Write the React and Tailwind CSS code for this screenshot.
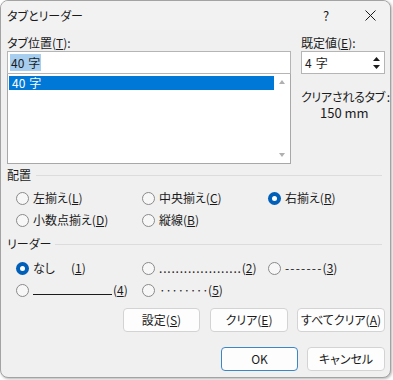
import React from "react";

const Radio = ({ checked }) =>
	checked ? (
		<span className="w-[13px] h-[13px] rounded-full bg-[#005fb8] flex items-center justify-center shrink-0">
			<span className="w-[5px] h-[5px] rounded-full bg-white" />
		</span>
	) : (
		<span className="w-[13px] h-[13px] rounded-full border border-[#8a8a8a] bg-[#f7f7f7] shrink-0" />
	);

const Option = ({ checked, children, className = "" }) => (
	<div className={"flex items-center w-[126px] h-[20px] shrink-0 " + className}>
		<Radio checked={checked} />
		<span className="ml-[4px] whitespace-nowrap">{children}</span>
	</div>
);

const Button = ({ children, w, primary }) => (
	<div
		className={
			"h-[24px] flex items-center justify-center rounded-[4px] bg-[#fdfdfd] whitespace-nowrap shrink-0 " +
			(primary ? "border border-[#3d86c6] " : "border border-[#d3d3d3] ") +
			w
		}
	>
		{children}
	</div>
);

const Section = ({ title, lineGap }) => (
	<div className="flex items-center h-[16px] leading-[16px]">
		<span>{title}</span>
		<span className={"flex-1 h-px bg-[#dcdcdc] mr-[3px] " + lineGap} />
	</div>
);

export default function App() {
	return (
		<div className="w-[393px] h-[380px] bg-white text-[12px] text-[#1b1b1b] font-['Noto_Sans_CJK_JP','Noto_Sans',sans-serif] [font-feature-settings:'palt']">
			<div className="w-[391px] h-[378px] rounded-[8px] border border-[#a3a3a3] bg-[#f0f0f0] shadow-[1px_1px_3px_rgba(0,0,0,0.3)] flex flex-col overflow-hidden">
				{/* title bar */}
				<div className="h-[29px] flex items-center bg-[#f2f2f2]">
					<span className="pl-[6px] leading-[16px]">タブとリーダー</span>
					<span className="ml-auto w-[48px] text-center text-[13px]">?</span>
					<span className="w-[40px] flex justify-center">
						<svg width="11" height="11" viewBox="0 0 11 11">
							<path d="M0.5 0.5L10.5 10.5M10.5 0.5L0.5 10.5" stroke="#1b1b1b" strokeWidth="1" />
						</svg>
					</span>
				</div>

				<div className="flex flex-col pl-[6px] pr-[5px]">
					{/* tab positions */}
					<div className="flex mt-[5px]">
						<div className="w-[284px] shrink-0 flex flex-col">
							<div className="h-[16px] leading-[16px]">
								タブ位置(<u>T</u>):
							</div>
							<div className="h-[23px] bg-white border border-[#b5b5b5] flex items-center pl-[2px]">
								<span className="bg-[#a7cdef] h-[17px] leading-[17px] px-px">
									40<span className="ml-[4px]">字</span>
								</span>
							</div>
							<div className="h-[90px] bg-white border border-[#a8a8a8] border-t-0 flex">
								<div className="flex-1 pl-px pt-[2px]">
									<div className="h-[14px] leading-[14px] bg-[#0078d7] text-white pl-[3px]">
										40<span className="ml-[4px]">字</span>
									</div>
								</div>
								<div className="w-[16px] flex flex-col items-center justify-between py-[6px]">
									<svg width="6" height="4" viewBox="0 0 6 4">
										<path d="M3 0L6 4H0Z" fill="#b0b0b0" />
									</svg>
									<svg width="6" height="4" viewBox="0 0 6 4">
										<path d="M0 0H6L3 4Z" fill="#b0b0b0" />
									</svg>
								</div>
							</div>
						</div>
						<div className="ml-[10px] flex flex-col">
							<div className="h-[16px] leading-[16px]">
								既定値(<u>E</u>):
							</div>
							<div className="w-[84px] h-[23px] bg-white border border-[#b5b5b5] flex items-center pl-[3px]">
								<span>
									4<span className="ml-[4px]">字</span>
								</span>
								<div className="ml-auto mr-[4px] flex flex-col gap-[4px]">
									<svg width="7" height="4" viewBox="0 0 7 4">
										<path d="M3.5 0L7 4H0Z" fill="#1b1b1b" />
									</svg>
									<svg width="7" height="4" viewBox="0 0 7 4">
										<path d="M0 0H7L3.5 4Z" fill="#1b1b1b" />
									</svg>
								</div>
							</div>
							<div className="mt-[16px] h-[14px] leading-[14px] whitespace-nowrap tracking-[-0.3px]">
								クリアされるタブ<span className="ml-[2px]">:</span>
							</div>
							<div className="mt-[1px] h-[16px] leading-[16px] pl-[19px] text-[13px]">150 mm</div>
						</div>
					</div>

					{/* alignment */}
					<div className="mt-[3px]">
						<Section title="配置" lineGap="ml-[5px]" />
					</div>
					<div className="flex flex-col gap-[2px] mt-[5px] pl-[9px]">
						<div className="flex">
							<Option>
								左揃え(<u>L</u>)
							</Option>
							<Option>
								中央揃え(<u>C</u>)
							</Option>
							<Option checked>
								右揃え(<u>R</u>)
							</Option>
						</div>
						<div className="flex">
							<Option>
								小数点揃え(<u>D</u>)
							</Option>
							<Option>
								縦線(<u>B</u>)
							</Option>
						</div>
					</div>

					{/* leader */}
					<div className="mt-[6px]">
						<Section title="リーダー" lineGap="ml-[4px]" />
					</div>
					<div className="flex flex-col gap-[2px] mt-[6px] pl-[9px]">
						<div className="flex">
							<Option checked>
								なし<span className="ml-[16px]">(<u>1</u>)</span>
							</Option>
							<Option>
								<span className="tracking-[0.8px]">....................</span>(<u>2</u>)
							</Option>
							<Option>
								<span className="tracking-[1.2px]">-------</span>(<u>3</u>)
							</Option>
						</div>
						<div className="flex">
							<Option>
								<span className="inline-block w-[79px] h-[12px] border-b border-[#1b1b1b] align-baseline mr-px" />
								(<u>4</u>)
							</Option>
							<Option>
								<span className="tracking-[-0.6px]">········</span>(<u>5</u>)
							</Option>
						</div>
					</div>

					{/* buttons */}
					<div className="flex justify-end mt-[8px] gap-[10px]">
						<Button w="w-[77px]">
							設定(<u>S</u>)
						</Button>
						<div className="flex gap-[9px]">
							<Button w="w-[78px]">
								クリア(<u>E</u>)
							</Button>
							<Button w="w-[88px]">
								すべてクリア(<u>A</u>)
							</Button>
						</div>
					</div>
					<div className="flex justify-end mt-[15px] gap-[9px]">
						<Button w="w-[77px]" primary>
							OK
						</Button>
						<Button w="w-[78px]">キャンセル</Button>
					</div>
				</div>
			</div>
		</div>
	);
}
